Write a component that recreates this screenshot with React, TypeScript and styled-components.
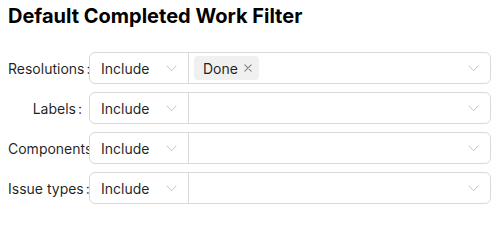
import React from "react";
import styled, { createGlobalStyle } from "styled-components";

const GlobalStyle = createGlobalStyle`
  html, body { margin: 0; padding: 0; background: #ffffff; }
  body { font-family: Inter, "Noto Sans", "Liberation Sans", sans-serif; }
  * { box-sizing: border-box; }
`;

const Page = styled.div`
  padding: 4px 8px 0 8px;
  width: 496px;
`;

const Title = styled.h1`
  margin: 0 0 24px 0;
  font-size: 20px;
  line-height: 24px;
  font-weight: 700;
  color: #000000;
  letter-spacing: 0;
`;

const Form = styled.div`
  width: 483px;
  display: flex;
  flex-direction: column;
  gap: 8px;
`;

const Row = styled.div`
  display: flex;
  align-items: stretch;
  height: 32px;
`;

const LabelCol = styled.div`
  width: 81px;
  flex: none;
  overflow: hidden;
  white-space: nowrap;
  text-align: right;
`;

const Label = styled.label`
  display: inline-flex;
  align-items: center;
  height: 32px;
  max-width: 100%;
  font-size: 14px;
  color: rgba(0, 0, 0, 0.88);
  &::after {
    content: ":";
    margin-left: 2px;
    margin-right: 7px;
  }
`;

const Compact = styled.div`
  flex: 1;
  display: flex;
  min-width: 0;
`;

const ModeSelect = styled.div`
  width: 100px;
  flex: none;
  display: flex;
  align-items: center;
  justify-content: space-between;
  padding: 0 11px;
  border: 1px solid #d9d9d9;
  border-radius: 6px 0 0 6px;
  font-size: 14px;
  color: rgba(0, 0, 0, 0.88);
  background: #fff;
`;

const ValueSelect = styled.div`
  flex: 1;
  margin-left: -1px;
  display: flex;
  align-items: center;
  gap: 4px;
  padding: 0 11px 0 5px;
  border: 1px solid #d9d9d9;
  border-radius: 0 6px 6px 0;
  background: #fff;
`;

const Values = styled.div`
  flex: 1;
  display: flex;
  align-items: center;
  gap: 4px;
`;

const Tag = styled.span`
  display: inline-flex;
  align-items: center;
  height: 24px;
  padding: 0 7px 0 9px;
  border-radius: 4px;
  background: rgba(0, 0, 0, 0.06);
  font-size: 14px;
  color: rgba(0, 0, 0, 0.88);
`;

const Remove = styled.span`
  display: inline-flex;
  margin-left: 6px;
  color: rgba(0, 0, 0, 0.45);
`;

const Arrow = styled.span`
  display: inline-flex;
  color: #c4c4c4;
`;

const Chevron = () => (
  <Arrow>
    <svg width="11" height="7" viewBox="0 0 11 7" fill="none">
      <path d="M1 1 L5.5 5.8 L10 1" stroke="currentColor" strokeWidth="1" strokeLinecap="round" strokeLinejoin="round" />
    </svg>
  </Arrow>
);

const CloseIcon = () => (
  <Remove>
    <svg width="8" height="8" viewBox="0 0 8 8" fill="none">
      <path d="M0.8 0.8 L7.2 7.2 M7.2 0.8 L0.8 7.2" stroke="currentColor" strokeWidth="1.1" strokeLinecap="round" />
    </svg>
  </Remove>
);

type Filter = { label: string; values: string[] };

const filters: Filter[] = [
  { label: "Resolutions", values: ["Done"] },
  { label: "Labels", values: [] },
  { label: "Components", values: [] },
  { label: "Issue types", values: [] },
];

export default function App() {
  return (
    <>
      <GlobalStyle />
      <Page>
        <Title>Default Completed Work Filter</Title>
        <Form>
          {filters.map((f) => (
            <Row key={f.label}>
              <LabelCol>
                <Label>{f.label}</Label>
              </LabelCol>
              <Compact>
                <ModeSelect>
                  <span>Include</span>
                  <Chevron />
                </ModeSelect>
                <ValueSelect>
                  <Values>
                    {f.values.map((v) => (
                      <Tag key={v}>
                        {v}
                        <CloseIcon />
                      </Tag>
                    ))}
                  </Values>
                  <Chevron />
                </ValueSelect>
              </Compact>
            </Row>
          ))}
        </Form>
      </Page>
    </>
  );
}
